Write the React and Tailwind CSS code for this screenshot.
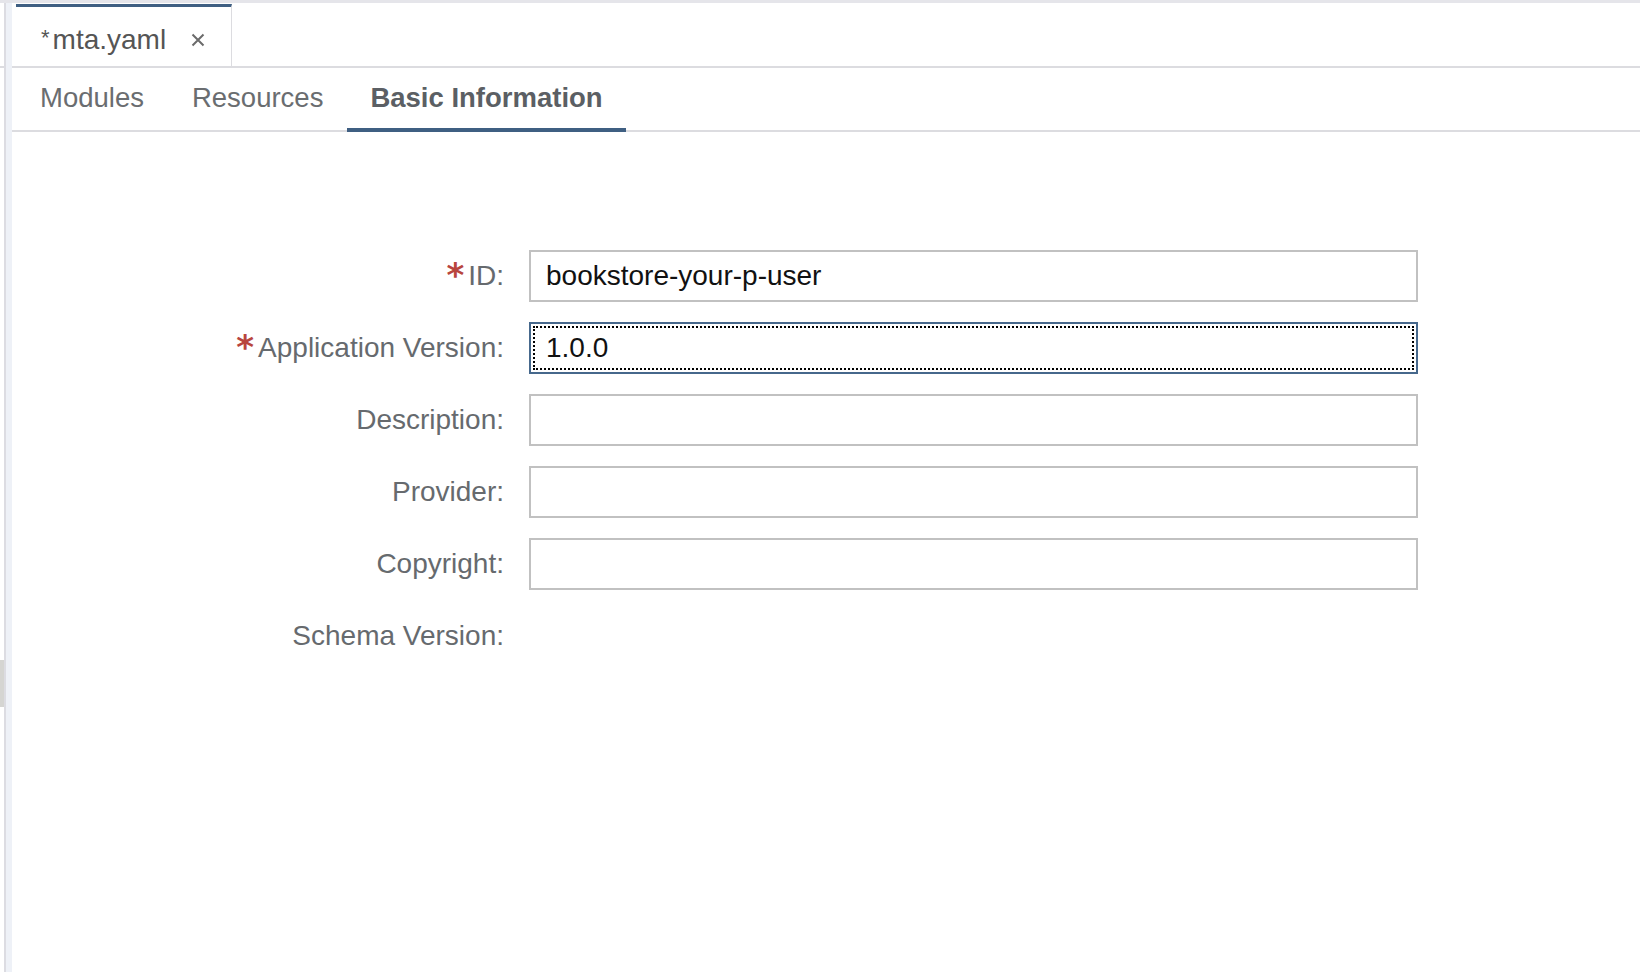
import React from "react";

const rows = [
  { label: "ID", required: true, value: "bookstore-your-p-user" },
  { label: "Application Version", required: true, value: "1.0.0", focused: true },
  { label: "Description", value: "" },
  { label: "Provider", value: "" },
  { label: "Copyright", value: "" },
];

function Field({ label, required, value, focused }) {
  return (
    <div className="flex h-[52px] items-center">
      <div className="flex w-[492px] items-center justify-end text-[28px] text-[#666a6e]">
        {required && (
          <span className="mr-[4px] -translate-y-[1px] font-['DejaVu_Sans',sans-serif] text-[34px] font-bold leading-none text-[#b8453e]">
            *
          </span>
        )}
        <span>{label}:</span>
      </div>
      <div
        className={
          focused
            ? "ml-[25px] flex h-[52px] w-[889px] items-center border-2 border-[#46688c] px-[15px] text-[28px] text-[#111] outline-2 outline-dotted outline-black outline-offset-[-6px]"
            : "ml-[25px] flex h-[52px] w-[889px] items-center border-2 border-[#c1c1c1] px-[15px] text-[28px] text-[#111]"
        }
      >
        {value}
      </div>
    </div>
  );
}

export default function App() {
  return (
    <div className="flex h-[972px] w-[1640px] flex-col overflow-hidden bg-white font-['Liberation_Sans',Arial,sans-serif]">
      <div className="h-[3px] w-full shrink-0 bg-[#e5e5ea]" />
      <div className="flex min-h-0 flex-1">
        {/* left gutter */}
        <div className="flex w-[4px] shrink-0 flex-col">
          <div className="h-[63px]" />
          <div className="h-[2px] bg-[#dcdce0]" />
          <div className="h-[592px]" />
          <div className="h-[47px] bg-[#d5d5d2]" />
        </div>
        <div className="w-[2px] shrink-0 bg-[#dcdce2]" />
        <div className="w-[6px] shrink-0 bg-[#eef1f7]" />

        {/* main */}
        <div className="flex min-w-0 flex-1 flex-col">
          {/* editor tab strip */}
          <div className="flex h-[63px] shrink-0 pl-[4px] pt-[1px]">
            <div className="flex w-[216px] items-center border-r border-t-[3px] border-r-[#dcdce0] border-t-[#3f5f82] pl-[25px] pt-[6px] text-[28px] text-[#555]">
              <span className="mr-[3px] -translate-y-[2px] text-[22px] leading-none">*</span>
              <span>mta.yaml</span>
              <svg className="ml-[25px] mt-[1px]" width="14" height="14" viewBox="0 0 14 14">
                <path d="M1.5 1.5 L12.5 12.5 M12.5 1.5 L1.5 12.5" stroke="#6b6b6b" strokeWidth="2" fill="none" />
              </svg>
            </div>
          </div>
          <div className="h-[2px] shrink-0 bg-[#dcdce0]" />

          {/* section tabs */}
          <div className="flex h-[64px] shrink-0 border-b-2 border-[#dcdce0] pl-[4px]">
            <div className="-mb-[2px] flex items-center border-b-4 border-transparent px-[24px] text-[27.5px] text-[#6a6d70]">
              Modules
            </div>
            <div className="-mb-[2px] flex items-center border-b-4 border-transparent px-[24px] text-[27.5px] text-[#6a6d70]">
              Resources
            </div>
            <div className="-mb-[2px] flex items-center border-b-4 border-[#3f5f82] px-[23px] text-[27.5px] font-bold text-[#5b5f64]">
              Basic Information
            </div>
          </div>

          {/* form */}
          <div className="mt-[118px] flex flex-col gap-[20px]">
            {rows.map((r) => (
              <Field key={r.label} {...r} />
            ))}
            <div className="flex h-[52px] items-center">
              <div className="w-[492px] text-right text-[28px] text-[#666a6e]">Schema Version:</div>
            </div>
          </div>
        </div>
      </div>
    </div>
  );
}
